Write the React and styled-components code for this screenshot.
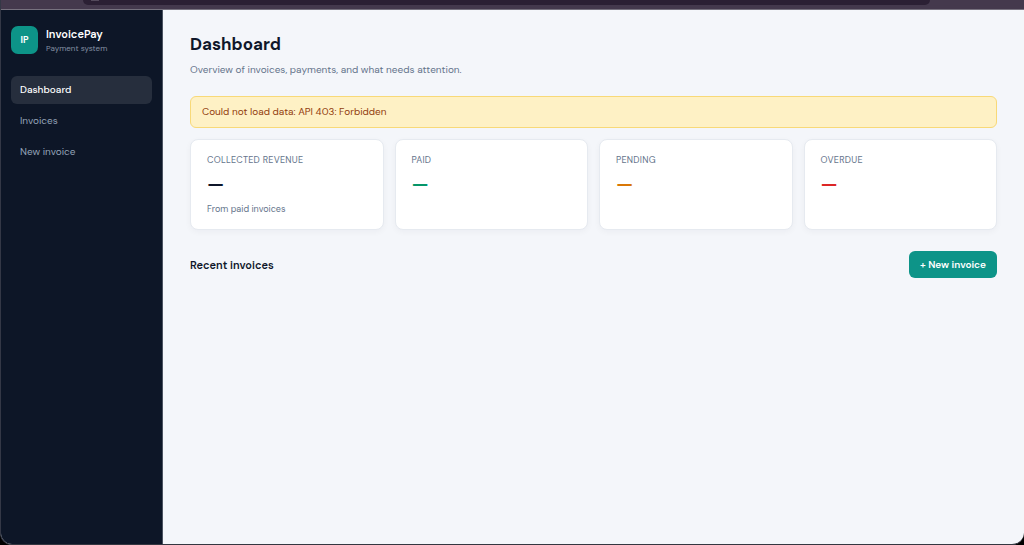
import React from "react"
import styled, { createGlobalStyle } from "styled-components"

const GlobalStyle = createGlobalStyle`
  * {
    box-sizing: border-box;
  }

  body {
    margin: 0;
    background: #000;
    color: #0f172a;
    font-family: "DM Sans", Inter, "Liberation Sans", sans-serif;
    font-size: 10px;
  }

  h1, h2, p {
    margin: 0;
  }

  a {
    text-decoration: none;
  }
`

const Window = styled.div`
  min-height: 100vh;
  display: flex;
  flex-direction: column;
  overflow: hidden;
  border-left: 1px solid #343846;
  border-bottom: 1px solid #343640;
  border-radius: 0 0 12px 12px;
  background: #f4f6fa;
`

const Chrome = styled.div`
  height: 10px;
  padding: 0 94px 0 82px;
  background: #44394d;
  border-bottom: 1px solid #77727f;
`

const AddressBar = styled.div`
  height: 5px;
  padding-left: 8px;
  border-radius: 0 0 10px 10px;
  background: #2b2034;
`

const AddressIcon = styled.div`
  width: 8px;
  height: 1px;
  background: #544a5c;
`

const Layout = styled.div`
  flex: 1;
  display: flex;
`

const Sidebar = styled.aside`
  width: 162px;
  flex-shrink: 0;
  padding: 16px 10px;
  background: #0d1627;
  border-right: 1px solid #4b5361;
`

const Brand = styled.div`
  display: flex;
  align-items: center;
  gap: 8px;
  margin-bottom: 22px;

  .logo {
    display: flex;
    align-items: center;
    justify-content: center;
    width: 27px;
    height: 28px;
    border-radius: 7px;
    background: #0d9488;
    color: #fff;
    font-size: 9px;
    font-weight: 700;
  }

  .name {
    color: #fff;
    font-size: 11px;
    font-weight: 600;
    line-height: 16px;
  }

  .tagline {
    color: #8490a3;
    font-size: 8px;
    line-height: 12px;
  }
`

const Nav = styled.nav`
  display: flex;
  flex-direction: column;
  gap: 3px;
`

const NavLink = styled.a`
  padding: 6px 9px;
  border-radius: 6px;
  line-height: 16px;
  color: ${({ $active }) => ($active ? "#fff" : "#94a3b8")};
  background: ${({ $active }) => ($active ? "#262e3d" : "transparent")};
  font-weight: ${({ $active }) => ($active ? 500 : 400)};
`

const Main = styled.main`
  flex: 1;
  padding: 22px 27px;

  h1 {
    font-size: 17px;
    font-weight: 700;
    line-height: 24px;
  }

  .subtitle {
    margin-top: 6px;
    color: #64748b;
    line-height: 16px;
  }
`

const Alert = styled.div`
  margin: 18px 0 11px;
  padding: 7px 11px;
  border: 1px solid #f8d978;
  border-radius: 6px;
  background: #fef1c5;
  color: #92400e;
  line-height: 16px;
`

const Cards = styled.section`
  display: grid;
  grid-template-columns: repeat(4, 1fr);
  gap: 11px;
`

const Card = styled.article`
  padding: 14px 16px;
  border: 1px solid #e6eaf0;
  border-radius: 8px;
  background: #fff;
  box-shadow: 0 2px 6px rgba(15, 23, 42, 0.04);

  .label {
    color: #64748b;
    font-size: 9px;
    line-height: 12px;
    letter-spacing: 0.03em;
    text-transform: uppercase;
  }

  .value {
    margin-top: 7px;
    color: ${({ $color }) => $color};
    font-size: 19px;
    font-weight: 600;
    line-height: 24px;
  }

  .note {
    margin-top: 6px;
    color: #64748b;
    font-size: 9px;
    line-height: 12px;
  }
`

const SectionHeader = styled.div`
  display: flex;
  justify-content: space-between;
  align-items: center;
  margin-top: 21px;

  h2 {
    font-size: 11px;
    font-weight: 600;
  }
`

const Button = styled.button`
  padding: 6px 11px;
  border: 0;
  border-radius: 6px;
  background: #0d9488;
  color: #fff;
  font: inherit;
  font-weight: 600;
  line-height: 15px;
  cursor: pointer;
`

const links = ["Dashboard", "Invoices", "New invoice"]

const stats = [
  { label: "Collected revenue", color: "#0f172a", note: "From paid invoices" },
  { label: "Paid", color: "#059669" },
  { label: "Pending", color: "#d97706" },
  { label: "Overdue", color: "#dc2626" },
]

export default function App() {
  return (
    <>
      <GlobalStyle />
      <Window>
        <Chrome>
          <AddressBar>
            <AddressIcon />
          </AddressBar>
        </Chrome>
        <Layout>
          <Sidebar>
            <Brand>
              <div className='logo'>IP</div>
              <div>
                <div className='name'>InvoicePay</div>
                <div className='tagline'>Payment system</div>
              </div>
            </Brand>
            <Nav>
              {links.map((link, i) => (
                <NavLink key={link} href='#' $active={i === 0}>
                  {link}
                </NavLink>
              ))}
            </Nav>
          </Sidebar>
          <Main>
            <h1>Dashboard</h1>
            <p className='subtitle'>
              Overview of invoices, payments, and what needs attention.
            </p>
            <Alert role='alert'>Could not load data: API 403: Forbidden</Alert>
            <Cards>
              {stats.map(({ label, color, note }) => (
                <Card key={label} $color={color}>
                  <p className='label'>{label}</p>
                  <p className='value'>—</p>
                  {note && <p className='note'>{note}</p>}
                </Card>
              ))}
            </Cards>
            <SectionHeader>
              <h2>Recent invoices</h2>
              <Button type='button'>+ New invoice</Button>
            </SectionHeader>
          </Main>
        </Layout>
      </Window>
    </>
  )
}
